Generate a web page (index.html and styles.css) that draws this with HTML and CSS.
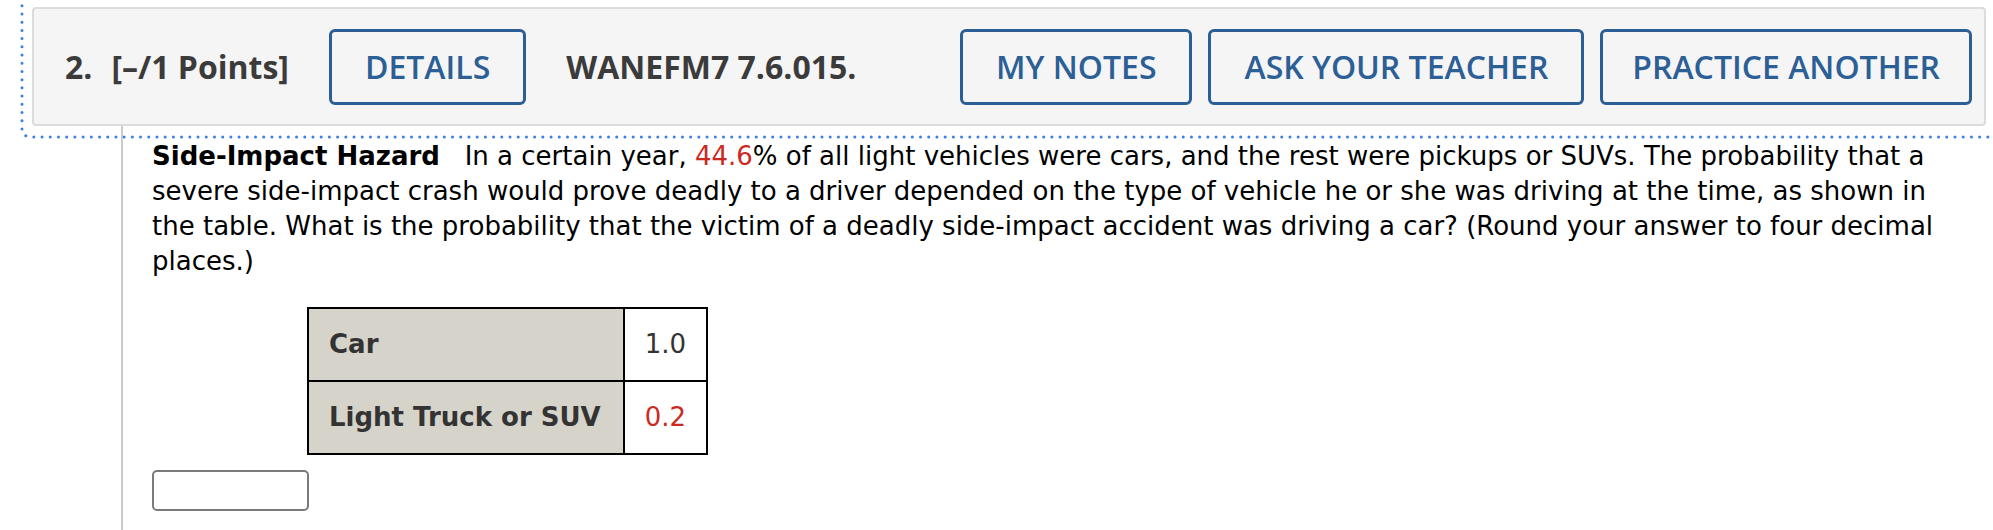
FILE: index.html
```html
<!DOCTYPE html>
<html lang="en">
<head>
<meta charset="utf-8">
<title>Question 2</title>
<link rel="stylesheet" href="styles.css">
</head>
<body>
<div class="question">
  <svg class="focus-ring" width="100%" height="140" aria-hidden="true">
    <rect x="22" y="-30" width="2200" height="167" rx="8" ry="8" fill="none" stroke="#3b7fe3" stroke-width="3" stroke-linecap="round" stroke-dasharray="0.01 8.2"></rect>
  </svg>
  <header class="qhead">
    <span class="qnum">2.</span>
    <span class="qpoints">[–/1 Points]</span>
    <button class="qbtn qbtn-details" type="button">DETAILS</button>
    <span class="qref">WANEFM7 7.6.015.</span>
    <div class="qactions">
      <button class="qbtn" type="button">MY NOTES</button>
      <button class="qbtn" type="button">ASK YOUR TEACHER</button>
      <button class="qbtn qbtn-practice" type="button">PRACTICE ANOTHER</button>
    </div>
  </header>
  <div class="qbody">
    <p class="qtext"><strong>Side-Impact Hazard</strong>&nbsp;&nbsp; In a certain year, <span class="red">44.6</span>% of all light vehicles were cars, and the rest were pickups or SUVs. The probability that a severe side-impact crash would prove deadly to a driver depended on the type of vehicle he or she was driving at the time, as shown in the table. What is the probability that the victim of a deadly side-impact accident was driving a car? (Round your answer to four decimal places.)</p>
    <table class="qtable">
      <tr><th>Car</th><td>1.0</td></tr>
      <tr><th>Light Truck or SUV</th><td class="red">0.2</td></tr>
    </table>
    <input class="answer" type="text" aria-label="answer">
  </div>
</div>
</body>
</html>
```

FILE: styles.css
```css
html, body {
  margin: 0;
  padding: 0;
  background: #ffffff;
  overflow: hidden;
}

.question {
  position: relative;
  min-height: 530px;
  display: flex;
  flex-direction: column;
}

.focus-ring {
  position: absolute;
  left: 0;
  top: 0;
  pointer-events: none;
  z-index: 2;
}

.qhead {
  display: flex;
  align-items: center;
  margin: 7px 7px 0 32px;
  height: 115px;
  padding: 0 12px 0 31px;
  background: #f5f5f5;
  border: 2px solid #dcdcdc;
  border-radius: 4px;
  font-family: "Open Sans", "Liberation Sans", sans-serif;
  font-size: 32px;
  color: #3b3b3b;
}

.qnum {
  font-weight: 700;
  margin-right: 19px;
}

.qpoints {
  font-weight: 700;
  margin-right: 40px;
}

.qref {
  font-weight: 700;
  margin-left: 40px;
}

.qbtn {
  font-family: "Open Sans", "Liberation Sans", sans-serif;
  font-size: 32px;
  font-weight: 600;
  color: #2c5f95;
  background: transparent;
  border: 3px solid #2c5f95;
  border-radius: 6px;
  height: 76px;
  padding: 0 33px;
  line-height: 1;
}

.qbtn-practice {
  padding: 0 29px;
}

.qactions {
  margin-left: auto;
  display: flex;
  gap: 16px;
}

.qbody {
  flex: 1;
  margin-left: 121px;
  border-left: 2px solid #cccccc;
  padding: 13px 28px 0 29px;
  font-family: "DejaVu Sans", Verdana, sans-serif;
  font-size: 26px;
  line-height: 35px;
  color: #000000;
}

.qtext {
  margin: 0;
}

.qtext strong {
  font-weight: 700;
}

.red {
  color: #cc2a1f;
}

.qtable {
  margin: 28px 0 0 155px;
  border-collapse: collapse;
  border: 2px solid #000;
  color: #333333;
}

.qtable th,
.qtable td {
  border: 2px solid #000;
  height: 71px;
  padding: 0 20px;
  line-height: 35px;
}

.qtable th {
  background: #d6d3ca;
  text-align: left;
  font-weight: 700;
  padding-right: 22px;
}

.qtable td {
  background: #ffffff;
  text-align: right;
  font-weight: 400;
}

.qtable td.red {
  color: #cc2a1f;
}

.answer {
  display: block;
  margin-top: 15px;
  width: 157px;
  height: 41px;
  box-sizing: border-box;
  border: 2px solid #7a7a7a;
  border-radius: 5px;
  background: #fff;
  font-family: "DejaVu Sans", Verdana, sans-serif;
  font-size: 20px;
}
```
